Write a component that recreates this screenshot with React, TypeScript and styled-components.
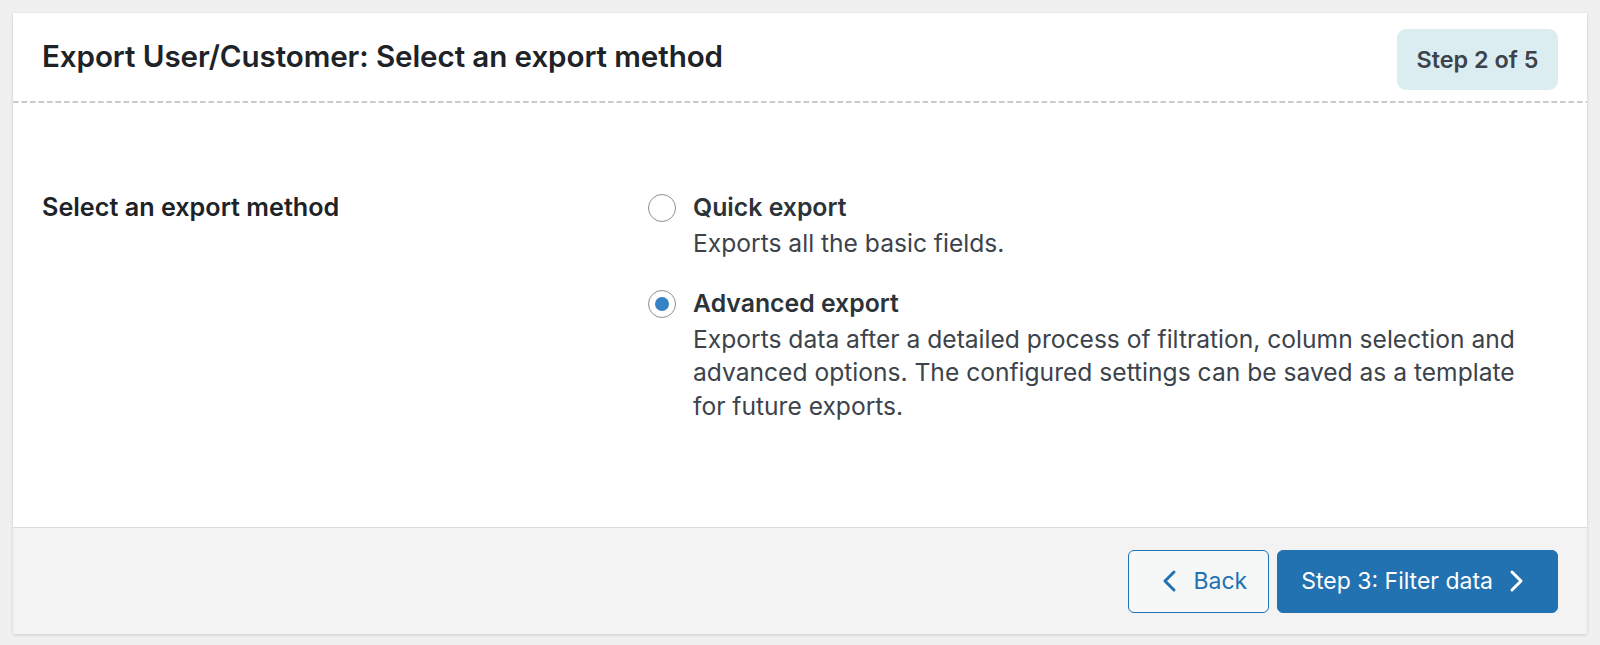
import React from "react";
import styled, { createGlobalStyle } from "styled-components";

const Global = createGlobalStyle`
  html, body { margin: 0; padding: 0; background: #f0f0f1; }
  body { font-family: Inter, "Noto Sans", "Liberation Sans", sans-serif; color: #3c434a; }
  * { box-sizing: border-box; }
`;

const Page = styled.div`
  padding: 13px 13px 11px 13px;
`;

const Card = styled.section`
  background: #fff;
  box-shadow: 0 1px 3px rgba(0, 0, 0, 0.16);
  display: flex;
  flex-direction: column;
`;

const Header = styled.header`
  height: 90px;
  display: flex;
  align-items: center;
  justify-content: space-between;
  padding: 4px 29px 2px 29px;
  background-image: linear-gradient(to right, #cbcbcd 0 5.5px, transparent 5.5px 8.5px);
  background-size: 8.5px 2px;
  background-repeat: repeat-x;
  background-position: 0 100%;
`;

const Title = styled.h2`
  margin: 0;
  font-size: 29.6px;
  font-weight: 600;
  color: #1d2327;
  letter-spacing: -0.1px;
  margin-top: -6px;
`;

const StepBadge = styled.div`
  width: 161px;
  height: 61px;
  border-radius: 9px;
  background: #dcedf2;
  color: #3c434a;
  font-size: 23.4px;
  font-weight: 600;
  display: flex;
  align-items: center;
  justify-content: center;
`;

const Body = styled.div`
  display: grid;
  grid-template-columns: 606px 1fr;
  padding: 87px 29px 104px 29px;
`;

const FieldLabel = styled.div`
  font-size: 25.2px;
  font-weight: 600;
  color: #1d2327;
  line-height: 33.5px;
  padding-top: 1px;
`;

const Options = styled.div`
  display: flex;
  flex-direction: column;
  gap: 25px;
`;

const Option = styled.label`
  display: grid;
  grid-template-columns: 28px 1fr;
  column-gap: 17px;
  align-items: start;
  cursor: pointer;
`;

const Radio = styled.span<{ $checked?: boolean }>`
  width: 28px;
  height: 28px;
  margin-top: 4px;
  border-radius: 50%;
  border: 1.5px solid #8c8f94;
  background: #fff;
  display: flex;
  align-items: center;
  justify-content: center;
  &::after {
    content: "";
    width: 14px;
    height: 14px;
    border-radius: 50%;
    background: #3582c4;
    display: ${(p) => (p.$checked ? "block" : "none")};
  }
`;

const OptionText = styled.div`
  display: flex;
  flex-direction: column;
  gap: 3px;
`;

const OptionTitle = styled.div`
  font-size: 24.8px;
  font-weight: 600;
  color: #2c3338;
  line-height: 34px;
`;

const OptionDesc = styled.div`
  font-size: 24.6px;
  color: #3c434a;
  line-height: 33.5px;
  max-width: 832px;
`;

const Footer = styled.footer`
  background: #f3f3f3;
  border-top: 1.5px solid #dcdcde;
  height: 107px;
  display: flex;
  align-items: center;
  justify-content: flex-end;
  gap: 8px;
  padding: 0 29px;
`;

const Button = styled.button<{ $primary?: boolean }>`
  height: 63px;
  border-radius: 6px;
  font-family: inherit;
  font-size: 23px;
  display: flex;
  align-items: center;
  cursor: pointer;
  border: 1.5px solid #2271b1;
  background: ${(p) => (p.$primary ? "#2271b1" : "#f6f7f7")};
  color: ${(p) => (p.$primary ? "#fff" : "#2271b1")};
  padding: ${(p) => (p.$primary ? "0 32px 0 23px" : "0 21px 0 32px")};
  gap: ${(p) => (p.$primary ? "15px" : "16px")};
`;

const Chevron = ({ dir }: { dir: "left" | "right" }) => (
  <svg width="17" height="26" viewBox="0 0 17 26" fill="none">
    <path
      d={dir === "left" ? "M13 4 L4 13 L13 22" : "M4 4 L13 13 L4 22"}
      stroke="currentColor"
      strokeWidth="3"
      strokeLinecap="round"
      strokeLinejoin="round"
    />
  </svg>
);

export default function App() {
  return (
    <>
      <Global />
      <Page>
        <Card>
          <Header>
            <Title>Export User/Customer: Select an export method</Title>
            <StepBadge>Step 2 of 5</StepBadge>
          </Header>
          <Body>
            <FieldLabel>Select an export method</FieldLabel>
            <Options>
              <Option>
                <Radio />
                <OptionText>
                  <OptionTitle>Quick export</OptionTitle>
                  <OptionDesc>Exports all the basic fields.</OptionDesc>
                </OptionText>
              </Option>
              <Option>
                <Radio $checked />
                <OptionText>
                  <OptionTitle>Advanced export</OptionTitle>
                  <OptionDesc>
                    Exports data after a detailed process of filtration, column selection and
                    advanced options. The configured settings can be saved as a template for
                    future exports.
                  </OptionDesc>
                </OptionText>
              </Option>
            </Options>
          </Body>
          <Footer>
            <Button>
              <Chevron dir="left" />
              Back
            </Button>
            <Button $primary>
              Step 3: Filter data
              <Chevron dir="right" />
            </Button>
          </Footer>
        </Card>
      </Page>
    </>
  );
}
